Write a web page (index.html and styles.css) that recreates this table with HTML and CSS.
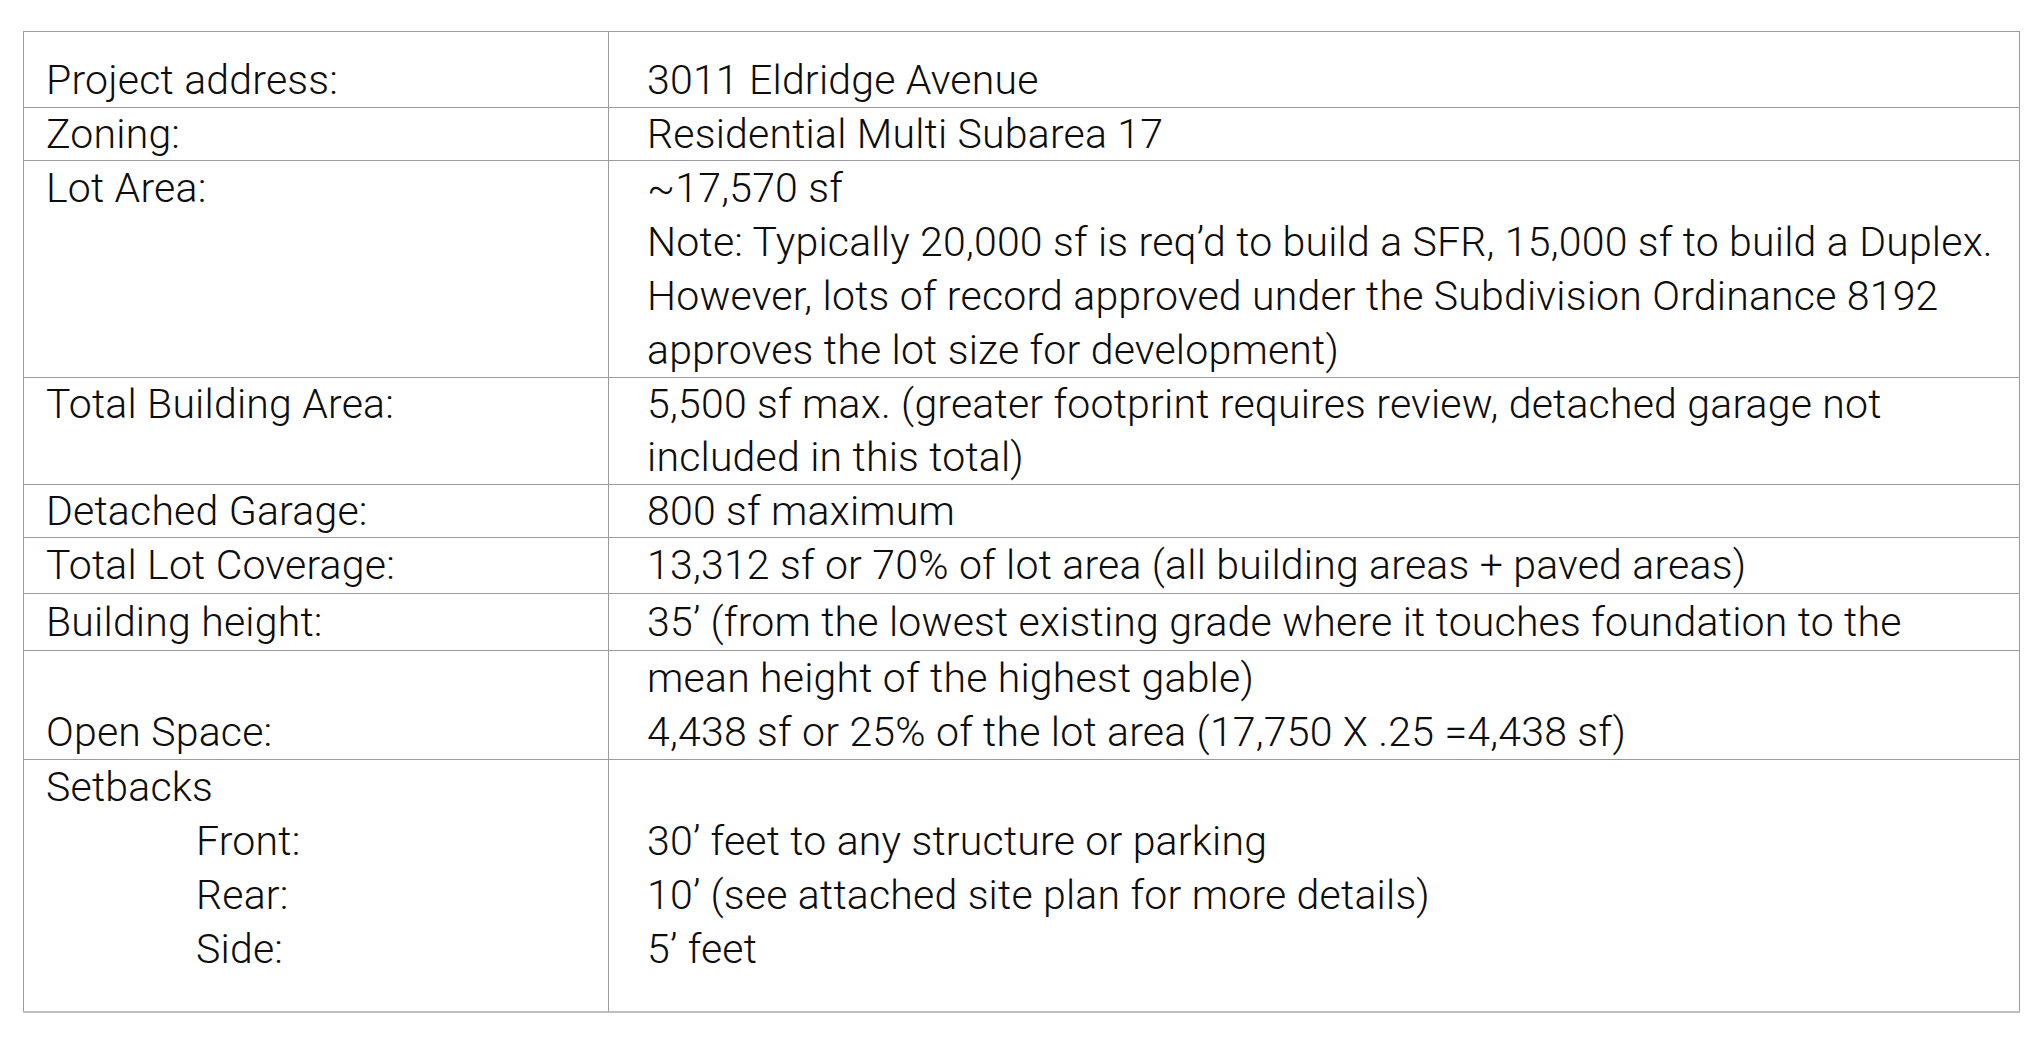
FILE: index.html
```html
<!DOCTYPE html>
<html lang="en">
<head>
<meta charset="utf-8">
<title>Project summary</title>
<link rel="stylesheet" href="styles.css">
</head>
<body>
<table class="summary">
  <colgroup><col class="col-label"><col class="col-value"></colgroup>
  <tr class="row-address">
    <td class="label">Project address:</td>
    <td class="value">3011 Eldridge Avenue</td>
  </tr>
  <tr class="row-zoning">
    <td class="label">Zoning:</td>
    <td class="value">Residential Multi Subarea 17</td>
  </tr>
  <tr class="row-lot">
    <td class="label">Lot Area:</td>
    <td class="value">~17,570 sf<br>Note: Typically 20,000 sf is req’d to build a SFR, 15,000 sf to build a Duplex.<br>However, lots of record approved under the Subdivision Ordinance 8192<br>approves the lot size for development)</td>
  </tr>
  <tr class="row-building">
    <td class="label">Total Building Area:</td>
    <td class="value">5,500 sf max. (greater footprint requires review, detached garage not<br>included in this total)</td>
  </tr>
  <tr class="row-garage">
    <td class="label">Detached Garage:</td>
    <td class="value">800 sf maximum</td>
  </tr>
  <tr class="row-coverage">
    <td class="label">Total Lot Coverage:</td>
    <td class="value">13,312 sf or 70% of lot area (all building areas + paved areas)</td>
  </tr>
  <tr class="row-height">
    <td class="label">Building height:</td>
    <td class="value">35’ (from the lowest existing grade where it touches foundation to the</td>
  </tr>
  <tr class="row-open">
    <td class="label"><br>Open Space:</td>
    <td class="value">mean height of the highest gable)<br>4,438 sf or 25% of the lot area (17,750 X .25 =4,438 sf)</td>
  </tr>
  <tr class="row-setbacks">
    <td class="label">Setbacks<br><span class="sub">Front:</span><br><span class="sub">Rear:</span><br><span class="sub">Side:</span></td>
    <td class="value"><br>30’ feet to any structure or parking<br>10’ (see attached site plan for more details)<br>5’ feet</td>
  </tr>
</table>
</body>
</html>
```
FILE: styles.css
```css
html, body {
  margin: 0;
  background: #ffffff;
}

body {
  padding: 31px 0 0 23px;
  font-family: "Roboto", "Liberation Sans", sans-serif;
  font-weight: 300;
  font-size: 41px;
  letter-spacing: 0.2px;
  color: #0d0d0d;
}

.summary {
  border-collapse: collapse;
  table-layout: fixed;
  width: 1997px;
}

.col-label { width: 585px; }

.summary td {
  border: 1px solid #9c9c9c;
  padding: 0;
  vertical-align: top;
  line-height: 54px;
  white-space: nowrap;
}

.summary .label { padding-left: 22px; }
.summary .value { padding-left: 38px; }

.row-address td { padding-top: 21px; }
.row-zoning td { line-height: 52px; }
.row-building td { line-height: 53px; }
.row-garage td { line-height: 52px; }
.row-coverage td { line-height: 55px; }
.row-height td { line-height: 56px; }

.row-setbacks td {
  padding-bottom: 35px;
  border-bottom: 2px solid #bdbdbd;
}

.sub {
  display: inline-block;
  padding-left: 150px;
}
```
